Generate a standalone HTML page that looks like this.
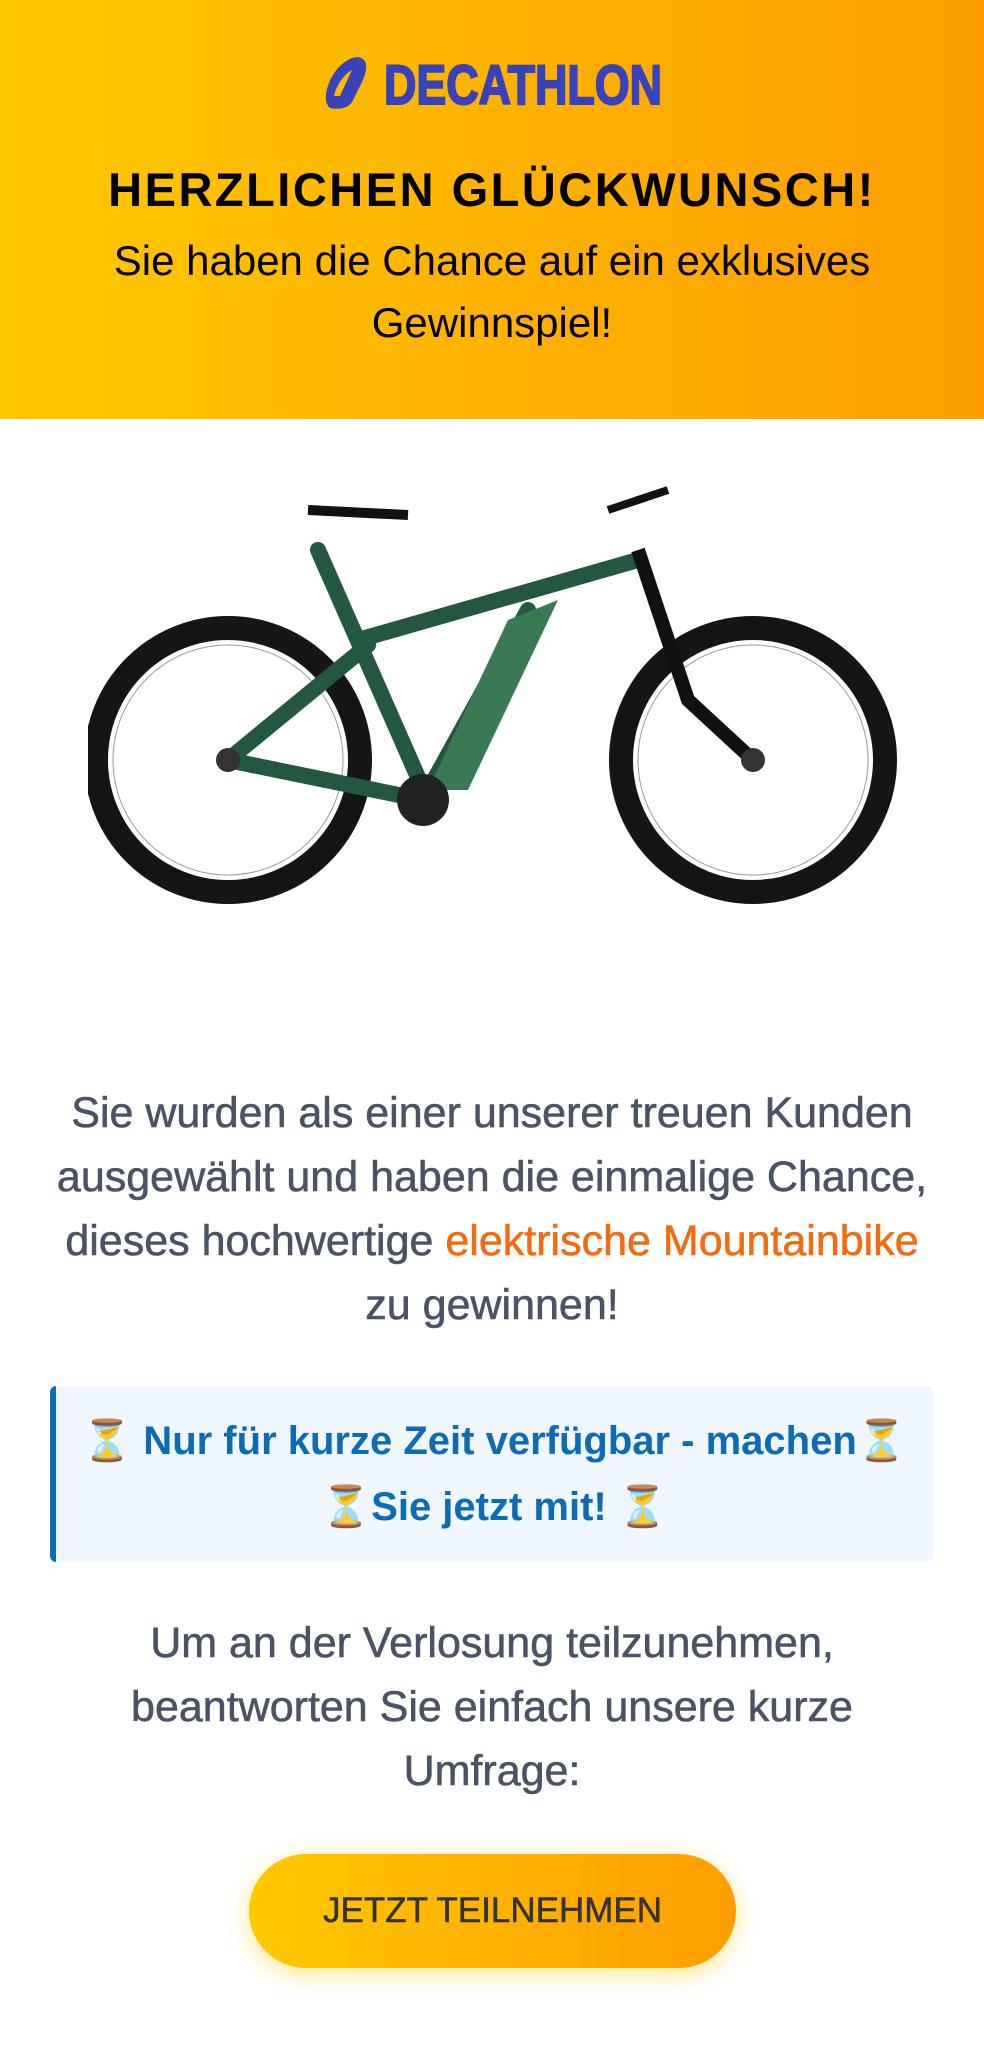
<!DOCTYPE html>
<html><head><meta charset="utf-8">
<style>
*{margin:0;padding:0;box-sizing:border-box}
body{width:984px;height:2055px;background:#fff;font-family:"Liberation Sans",sans-serif;overflow:hidden;position:relative}
.hdr{position:absolute;left:0;top:0;width:984px;height:419px;background:linear-gradient(90deg,#ffc800,#ff9d00);text-align:center}
.logo{position:absolute;left:322px;top:56px;width:345px;height:54px}
h1{position:absolute;top:162px;width:100%;font-size:47px;font-weight:bold;color:#000;letter-spacing:2.5px}
.sub{position:absolute;top:230px;left:0;width:100%;font-size:42px;line-height:62px;color:#000}
.bike{position:absolute;left:88px;top:470px}
.p{position:absolute;left:0;width:984px;text-align:center;color:#4a5366;font-size:43px;line-height:64px;-webkit-text-stroke:0.6px #4a5366}
.or{color:#f26b10;-webkit-text-stroke:0.6px #f26b10}
.box{position:absolute;left:50px;top:1386px;width:883px;height:176px;background:#eff6fe;border-left:6px solid #0b6bb5;border-radius:6px;text-align:center;color:#0b6bb5;font-size:40px;line-height:66px;padding-top:22px;font-weight:bold}
.btn{position:absolute;left:249px;top:1854px;width:487px;height:114px;border-radius:57px;background:linear-gradient(90deg,#ffc800,#ff9d00);box-shadow:0 6px 24px rgba(255,200,0,.45);text-align:center;line-height:114px;font-size:35px;color:#333;-webkit-text-stroke:0.5px #333}
</style></head><body>
<div class="hdr">
<svg class="logo" viewBox="0 0 345 54">
<path d="M8 52 C0 46 4 26 16 12 C26 2 36 -2 42 4 C46 8 44 18 40 26 L30 46 C26 52 18 54 8 52 Z M18 40 L30 14 C22 18 14 30 12 40 Z" fill="#3643ba" fill-rule="evenodd"/>
<text x="62" y="48" font-family="Liberation Sans" font-weight="bold" font-size="56" fill="#3643ba" stroke="#3643ba" stroke-width="2" textLength="278" lengthAdjust="spacingAndGlyphs">DECATHLON</text>
</svg>
<h1>HERZLICHEN GLÜCKWUNSCH!</h1>
<div class="sub">Sie haben die Chance auf ein exklusives<br>Gewinnspiel!</div>
</div>
<svg class="bike" width="810" height="450" viewBox="0 0 810 450">
<g fill="none" stroke="#151515">
<circle cx="140" cy="290" r="132" stroke-width="24"/>
<circle cx="665" cy="290" r="132" stroke-width="24"/>
<circle cx="140" cy="290" r="115" stroke-width="1" stroke="#999"/>
<circle cx="665" cy="290" r="115" stroke-width="1" stroke="#999"/>
</g>
<g stroke="#24573f" stroke-width="16" fill="none" stroke-linecap="round">
<path d="M230 80 L340 330"/>
<path d="M270 170 L550 90"/>
<path d="M440 140 L335 330"/>
<path d="M140 290 L335 330"/>
<path d="M140 290 L280 175"/>
</g>
<path d="M420 150 L470 130 L380 320 L340 320 Z" fill="#3a7a52"/>
<path d="M550 80 L600 230 L665 290" stroke="#111" stroke-width="14" fill="none"/>
<path d="M220 40 L320 45" stroke="#111" stroke-width="10"/>
<path d="M520 40 L580 20" stroke="#111" stroke-width="8"/>
<circle cx="335" cy="330" r="26" fill="#222"/>
<circle cx="140" cy="290" r="12" fill="#333"/>
<circle cx="665" cy="290" r="12" fill="#333"/>
</svg>
<div class="p" style="top:1081px">Sie wurden als einer unserer treuen Kunden<br>ausgewählt und haben die einmalige Chance,<br>dieses hochwertige <span class="or">elektrische Mountainbike</span><br>zu gewinnen!</div>
<div class="box">⏳ Nur für kurze Zeit verfügbar - machen⏳<br>⏳Sie jetzt mit! ⏳</div>
<div class="p" style="top:1611px">Um an der Verlosung teilzunehmen,<br>beantworten Sie einfach unsere kurze<br>Umfrage:</div>
<div class="btn">JETZT TEILNEHMEN</div>
</body></html>
